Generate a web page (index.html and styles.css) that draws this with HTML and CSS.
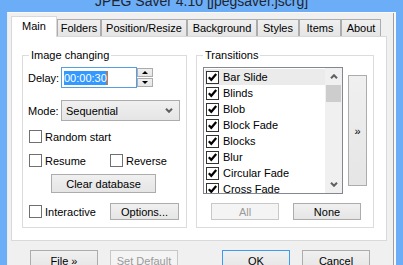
FILE: index.html
```html
<!DOCTYPE html>
<html lang="en">

<head>
    <meta charset="UTF-8">
    <title>JPEG Saver 4.10</title>
    <link rel="stylesheet" href="styles.css">
</head>

<body>
    <div class="title"><span>JPEG Saver 4.10 [jpegsaver.jscrg]</span></div>

    <div class="client">
        <div class="tabs">
            <div class="tab tab-main active">Main</div>
            <div class="tab tab-folders">Folders</div>
            <div class="tab tab-position">Position/Resize</div>
            <div class="tab tab-background">Background</div>
            <div class="tab tab-styles">Styles</div>
            <div class="tab tab-items">Items</div>
            <div class="tab tab-about">About</div>
        </div>

        <div class="panel">
            <fieldset class="group group-image">
                <legend>Image changing</legend>
                <div class="group-body">
                    <div class="field">
                        <span class="field-label">Delay:</span>
                        <div class="edit"><span class="sel">00:00:30</span><span class="caret"></span></div>
                        <div class="spin">
                            <div class="spin-btn"><span class="tri-up"></span></div>
                            <div class="spin-btn"><span class="tri-down"></span></div>
                        </div>
                    </div>

                    <div class="field field-mode">
                        <span class="field-label">Mode:</span>
                        <div class="combo">
                            <span>Sequential</span>
                            <svg width="8" height="5" viewBox="0 0 8 5"><polyline points="1,0.8 4,3.8 7,0.8" fill="none" stroke="#606060" stroke-width="2"/></svg>
                        </div>
                    </div>

                    <div class="check-row row-random">
                        <label class="check"><span class="box"></span>Random start</label>
                    </div>

                    <div class="check-row row-resume">
                        <label class="check check-left"><span class="box"></span>Resume</label>
                        <label class="check"><span class="box"></span>Reverse</label>
                    </div>

                    <div class="btn btn-clear">Clear database</div>

                    <div class="check-row row-interactive">
                        <label class="check check-left"><span class="box"></span>Interactive</label>
                        <div class="btn btn-options">Options...</div>
                    </div>
                </div>
            </fieldset>

            <fieldset class="group group-transitions">
                <legend>Transitions</legend>
                <div class="group-body">
                    <div class="list-wrap">
                        <div class="listbox">
                            <div class="items" id="items"></div>
                            <div class="scrollbar">
                                <div class="sb-arrow">
                                    <svg width="8" height="5" viewBox="0 0 8 5"><polyline points="1,4.2 4,1.2 7,4.2" fill="none" stroke="#606060" stroke-width="2"/></svg>
                                </div>
                                <div class="sb-thumb"></div>
                                <div class="sb-track"></div>
                                <div class="sb-arrow">
                                    <svg width="8" height="5" viewBox="0 0 8 5"><polyline points="1,0.8 4,3.8 7,0.8" fill="none" stroke="#606060" stroke-width="2"/></svg>
                                </div>
                            </div>
                        </div>
                        <div class="btn btn-more">&raquo;</div>
                    </div>
                    <div class="list-buttons">
                        <div class="btn disabled">All</div>
                        <div class="btn">None</div>
                    </div>
                </div>
            </fieldset>
        </div>

        <div class="footer">
            <div class="btn">File &raquo;</div>
            <div class="btn disabled">Set Default</div>
            <div class="btn default btn-ok">OK</div>
            <div class="btn">Cancel</div>
        </div>
    </div>

    <script>
        const transitions = ['Bar Slide', 'Blinds', 'Blob', 'Block Fade', 'Blocks', 'Blur', 'Circular Fade', 'Cross Fade'];
        const list = document.getElementById('items');

        transitions.forEach((name, i) => {
            const item = document.createElement('div');
            item.className = i === 0 ? 'item current' : 'item';
            item.innerHTML = `
                <span class="lbox"><svg width="11" height="11" viewBox="0 0 11 11"><polyline points="1.8,5.2 4.3,7.8 9.2,2" fill="none" stroke="#000" stroke-width="2.2"/></svg></span>
                <span>${name}</span>
            `;
            list.appendChild(item);
        });
    </script>
</body>

</html>
```

FILE: styles.css
```css
* {
    margin: 0;
    padding: 0;
    box-sizing: border-box;
}

body {
    width: 403px;
    height: 265px;
    overflow: hidden;
    background-color: #6badf6;
    font-family: "Liberation Sans", Arial, sans-serif;
    font-size: 11px;
    color: #000;
}

.title {
    height: 12px;
    overflow: hidden;
    text-align: center;
    font-size: 14px;
    color: #1e2430;
}

.title span {
    display: block;
    line-height: 16px;
    margin-top: -7px;
}

.client {
    margin-left: 7px;
    width: 389px;
    height: 253px;
    background-color: #f0f0f0;
    border-left: 1px solid #e6ecf2;
    border-top: 1px solid #fafafa;
    padding-top: 3px;
    box-shadow: inset -2px 0 0 #f8f8f8, inset -3px 0 0 #a0a0a0;
}

/* tabs */
.tabs {
    display: flex;
    align-items: flex-end;
    height: 20px;
    margin-left: 3px;
}

.tab {
    height: 17px;
    border: 1px solid #acacac;
    border-bottom: none;
    background: linear-gradient(#f0f0f0, #e5e5e5);
    text-align: center;
    line-height: 16px;
}

.tab.active {
    position: relative;
    z-index: 1;
    height: 21px;
    margin-bottom: -1px;
    line-height: 19px;
    background: #fff;
    border-color: #d9d9d9;
}

.tab-main { width: 46px; }
.tab-folders { width: 44px; }
.tab-position { width: 86px; }
.tab-background { width: 70px; }
.tab-styles { width: 42px; }
.tab-items { width: 42px; }
.tab-about { width: 40px; }

.panel {
    display: flex;
    gap: 9px;
    margin-left: 3px;
    width: 376px;
    height: 205px;
    padding: 12px 0 0 10px;
    background-color: #fff;
    border: 1px solid #d9d9d9;
}

/* group boxes */
.group {
    height: 179px;
    padding: 0;
    border: 1px solid #dcdcdc;
}

.group legend {
    margin-left: 6px;
    padding: 0 2px;
    line-height: 13px;
}

.group-image { width: 165px; }
.group-transitions { width: 178px; }

.group-image .group-body {
    padding: 5px 0 0 5px;
}

.group-transitions .group-body {
    padding: 5px 0 0 6px;
}

.field {
    display: flex;
    align-items: center;
    height: 21px;
}

.field-mode {
    margin-top: 12px;
}

.field-label {
    width: 33px;
}

.edit {
    display: flex;
    align-items: center;
    width: 76px;
    height: 21px;
    padding-left: 2px;
    background-color: #fff;
    border: 1px solid #569de5;
}

.sel {
    background-color: #3399ff;
    color: #fff;
    line-height: 14px;
}

.caret {
    width: 1px;
    height: 14px;
    background-color: #f07000;
}

.spin {
    display: flex;
    flex-direction: column;
    gap: 1px;
    width: 16px;
    height: 21px;
    padding-top: 1px;
}

.spin-btn {
    display: flex;
    align-items: center;
    justify-content: center;
    height: 9px;
    border: 1px solid #acacac;
    background: linear-gradient(#f0f0f0, #e5e5e5);
}

.tri-up {
    border-left: 3px solid transparent;
    border-right: 3px solid transparent;
    border-bottom: 3px solid #000;
}

.tri-down {
    border-left: 3px solid transparent;
    border-right: 3px solid transparent;
    border-top: 3px solid #000;
}

.combo {
    display: flex;
    align-items: center;
    justify-content: space-between;
    width: 119px;
    height: 21px;
    padding: 0 6px 0 4px;
    border: 1px solid #acacac;
    background: linear-gradient(#f0f0f0, #e5e5e5);
}

.check-row {
    display: flex;
    align-items: center;
    padding-left: 1px;
}

.row-random {
    height: 13px;
    margin-top: 9px;
}

.row-resume {
    height: 13px;
    margin-top: 11px;
}

.row-interactive {
    height: 17px;
    margin-top: 10px;
}

.check {
    display: flex;
    align-items: center;
    gap: 3px;
}

.check-left {
    width: 81px;
}

.box {
    width: 13px;
    height: 13px;
    background-color: #fff;
    border: 1px solid #707070;
}

/* buttons */
.btn {
    display: flex;
    align-items: center;
    justify-content: center;
    width: 68px;
    height: 17px;
    border: 1px solid #acacac;
    background: linear-gradient(#f0f0f0, #e5e5e5);
}

.btn.disabled {
    color: #9a9a9a;
    border-color: #c8c8c8;
    background: #f4f4f4;
}

.btn.default {
    border-color: #3c9af0;
}

.btn-clear {
    width: 105px;
    height: 19px;
    margin: 7px 0 0 23px;
}

.btn-options {
    width: 69px;
}

/* transitions list */
.list-wrap {
    display: flex;
    align-items: flex-start;
    gap: 5px;
}

.listbox {
    display: flex;
    width: 140px;
    height: 127px;
    border: 1px solid #828790;
    background-color: #fff;
}

.items {
    width: 121px;
    padding-top: 1px;
    overflow: hidden;
}

.item {
    display: flex;
    align-items: center;
    gap: 4px;
    height: 16px;
    margin-left: 1px;
    padding-left: 1px;
}

.item.current {
    background-color: #ebebeb;
}

.lbox {
    display: flex;
    align-items: center;
    justify-content: center;
    width: 13px;
    height: 13px;
    background-color: #fff;
    border: 1px solid #333;
}

.scrollbar {
    display: flex;
    flex-direction: column;
    width: 17px;
    background-color: #f0f0f0;
}

.sb-arrow {
    display: flex;
    align-items: center;
    justify-content: center;
    height: 17px;
}

.sb-thumb {
    height: 17px;
    margin: 0 1px;
    background-color: #cdcdcd;
}

.sb-track {
    flex-grow: 1;
}

.btn-more {
    width: 19px;
    height: 111px;
    margin-top: 8px;
}

.list-buttons {
    display: flex;
    gap: 14px;
    margin-top: 9px;
    padding-left: 8px;
}

/* dialog buttons */
.footer {
    display: flex;
    gap: 12px;
    margin-top: 9px;
    padding-left: 22px;
}

.footer .btn {
    height: 21px;
}

.btn-ok {
    margin-left: 32px;
}
```
